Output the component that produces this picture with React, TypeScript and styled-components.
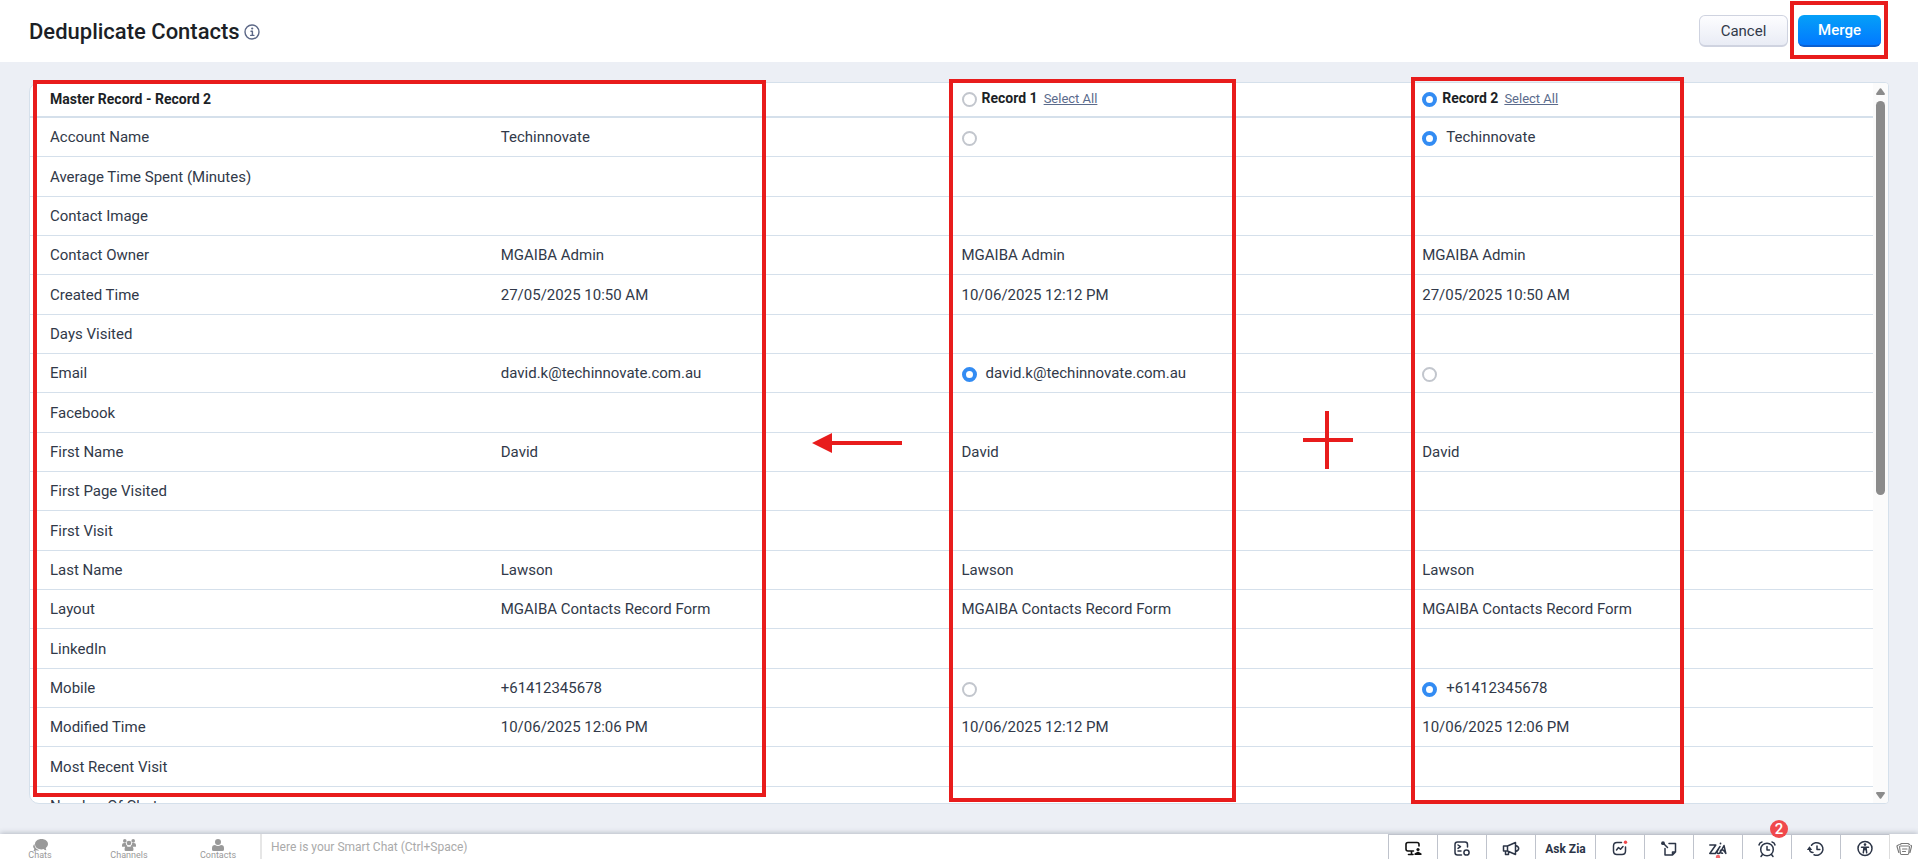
import React from "react";
import styled, { createGlobalStyle, css } from "styled-components";

const GlobalStyle = createGlobalStyle`
  * { box-sizing: border-box; }
  body {
    margin: 0;
    background: #eceff5;
    color: #313949;
    font-family: Roboto, "Liberation Sans", sans-serif;
    font-size: 15px;
  }
  button, input { font-family: inherit; }
`;

const RED = "#e81c1c";
const LINE = "#d5e0eb";

const Shell = styled.div`
  display: flex;
  flex-direction: column;
  height: 100vh;
  overflow: hidden;
`;

const Header = styled.header`
  display: flex;
  align-items: center;
  justify-content: space-between;
  flex: none;
  height: 62px;
  padding: 0 37px 0 29px;
  background: #fff;
`;

const TitleGroup = styled.div`
  display: flex;
  align-items: center;
  gap: 4px;
  padding-top: 2px;
`;

const Title = styled.h1`
  margin: 0;
  color: #1c1f26;
  font-size: 22px;
  font-weight: 500;
  line-height: 28px;
`;

const InfoButton = styled.button`
  display: flex;
  padding: 0;
  border: 0;
  background: none;
  color: #5b6786;
`;

const Actions = styled.div`
  display: flex;
  gap: 10px;
`;

const Button = styled.button<{ $primary?: boolean }>`
  height: 32px;
  min-width: 89px;
  padding: 0 20px;
  border: 1px solid #cfd3e0;
  border-bottom-width: 2px;
  border-radius: 6px;
  background: linear-gradient(#fdfdff, #e9ecf5);
  color: #313949;
  font-size: 15px;
  ${(p) =>
    p.$primary &&
    css`
      min-width: 83px;
      border-width: 0 0 2px;
      border-color: #0a5fd0;
      background: linear-gradient(#05a0f8, #0279ff);
      color: #fff;
      font-weight: 500;
    `}
`;

const MergeSlot = styled.div`
  position: relative;
  display: flex;
`;

const Frame = styled.span<{ $top: number; $left: number; $right?: number; $bottom: number; $width?: number }>`
  position: absolute;
  top: ${(p) => p.$top}px;
  left: ${(p) => p.$left}px;
  bottom: ${(p) => p.$bottom}px;
  ${(p) => (p.$width ? `width: ${p.$width}px;` : `right: ${p.$right}px;`)}
  border: 4px solid ${RED};
  pointer-events: none;
`;

const Main = styled.main`
  display: flex;
  flex: 1;
  min-height: 0;
  padding: 20px 29px 30px;
`;

const Stage = styled.div`
  position: relative;
  display: flex;
  flex: 1;
  min-width: 0;
`;

const Panel = styled.section`
  display: flex;
  flex: 1;
  min-width: 0;
  overflow: hidden;
  border: 1px solid ${LINE};
  border-radius: 10px 4px 4px 10px;
  background: #fff;
`;

const TableArea = styled.div`
  flex: 1;
  min-width: 0;
  overflow: hidden;
`;

const Table = styled.table`
  width: 100%;
  border-collapse: separate;
  border-spacing: 0;
  table-layout: fixed;
`;

const HeadCell = styled.th<{ $first?: boolean }>`
  height: 35px;
  padding: 0 10px 2px ${(p) => (p.$first ? 20 : 10)}px;
  border-bottom: 2px solid ${LINE};
  color: #1c1f26;
  font-size: 14px;
  font-weight: 700;
  line-height: 20px;
  text-align: left;
`;

const Row = styled.tr`
  height: 39px;
  &:nth-child(3n + 2) { height: 40px; }
`;

const NameCell = styled.th`
  padding: 0 10px 0 20px;
  border-bottom: 1px solid ${LINE};
  font-weight: 400;
  line-height: 20px;
  text-align: left;
  white-space: nowrap;
`;

const ValueCell = styled.td`
  padding: 0 10px;
  border-bottom: 1px solid ${LINE};
  line-height: 20px;
  white-space: nowrap;
`;

const Choice = styled.label<{ $gap: number }>`
  display: inline-flex;
  align-items: center;
  gap: ${(p) => p.$gap}px;
  height: 20px;
  vertical-align: top;
`;

const Radio = styled.input`
  appearance: none;
  width: 15px;
  height: 15px;
  margin: 3px 0 0;
  border: 2px solid #c2c6cd;
  border-radius: 50%;
  background: #fff;
  &:checked { border: 4px solid #338cf3; }
`;

const SelectAll = styled.a`
  margin-left: 6px;
  color: #5b6b8c;
  font-size: 13px;
  font-weight: 400;
`;

const ScrollTrack = styled.div`
  display: flex;
  flex: none;
  flex-direction: column;
  align-items: center;
  width: 15px;
  padding: 5px 0 4px;
  background: #fbfbfb;
  color: #8b8b8b;
`;

const ScrollRail = styled.div`
  flex: 1;
  width: 9px;
  padding-top: 6px;
`;

const ScrollThumb = styled.div`
  height: 57%;
  border-radius: 5px;
  background: currentColor;
`;

const Arrow = styled.svg`
  position: absolute;
  top: 351px;
  left: 783px;
`;

const Plus = styled.svg`
  position: absolute;
  top: 329px;
  left: 1274px;
`;

const Dock = styled.footer`
  display: flex;
  flex: none;
  height: 25px;
  background: #fff;
  box-shadow: 0 -1px 5px rgba(60, 70, 90, 0.3);
`;

const ChatTabs = styled.nav`
  display: flex;
  gap: 9px;
  width: 262px;
  border-right: 2px solid #e6e6e6;
`;

const ChatTab = styled.button`
  display: flex;
  flex-direction: column;
  align-items: center;
  width: 80px;
  height: 25px;
  padding: 5px 0 0;
  border: 0;
  background: none;
  color: #999;
  font-size: 9px;
  line-height: 9px;
  svg { flex: none; }
`;

const ChatInput = styled.input`
  flex: 1;
  min-width: 0;
  padding: 0 9px;
  border: 0;
  outline: 0;
  background: transparent;
  font-size: 12px;
  &::placeholder { color: #aaa; opacity: 1; }
`;

const Tools = styled.div`
  display: flex;
  border-top: 1px solid #bfc3cc;
`;

const Tool = styled.button<{ $wide?: boolean }>`
  position: relative;
  display: flex;
  align-items: center;
  justify-content: center;
  width: ${(p) => (p.$wide ? 60 : 49)}px;
  padding: 4px 0 0;
  border: 0;
  border-left: 1px solid #bfc3cc;
  background: #fff;
  color: #2c3547;
  font-size: 12px;
  font-weight: 700;
`;

const Badge = styled.span`
  position: absolute;
  top: -15px;
  left: 27px;
  width: 18px;
  height: 18px;
  border-radius: 50%;
  background: #f0484c;
  color: #fff;
  font-size: 15px;
  font-weight: 500;
  line-height: 18px;
`;

const StackButton = styled.button`
  display: flex;
  align-items: center;
  justify-content: center;
  width: 29px;
  padding: 4px 0 0;
  border: 0;
  border-left: 1px solid #ddd;
  background: #fff;
  color: #777;
`;

const Icon = ({ children, w = 18, h = 18 }: { children: React.ReactNode; w?: number; h?: number }) => (
  <svg
    width={w}
    height={h}
    viewBox={`0 0 ${w} ${h}`}
    fill="none"
    stroke="currentColor"
    strokeWidth="1.5"
    strokeLinecap="round"
    strokeLinejoin="round"
    aria-hidden="true"
  >
    {children}
  </svg>
);

type Pick = { value?: string; checked: boolean };
type Value = string | Pick | undefined;

const rows: [string, string?, Value?, Value?][] = [
  ["Account Name", "Techinnovate", { checked: false }, { value: "Techinnovate", checked: true }],
  ["Average Time Spent (Minutes)"],
  ["Contact Image"],
  ["Contact Owner", "MGAIBA Admin", "MGAIBA Admin", "MGAIBA Admin"],
  ["Created Time", "27/05/2025 10:50 AM", "10/06/2025 12:12 PM", "27/05/2025 10:50 AM"],
  ["Days Visited"],
  [
    "Email",
    "david.k@techinnovate.com.au",
    { value: "david.k@techinnovate.com.au", checked: true },
    { checked: false },
  ],
  ["Facebook"],
  ["First Name", "David", "David", "David"],
  ["First Page Visited"],
  ["First Visit"],
  ["Last Name", "Lawson", "Lawson", "Lawson"],
  ["Layout", "MGAIBA Contacts Record Form", "MGAIBA Contacts Record Form", "MGAIBA Contacts Record Form"],
  ["LinkedIn"],
  ["Mobile", "+61412345678", { checked: false }, { value: "+61412345678", checked: true }],
  ["Modified Time", "10/06/2025 12:06 PM", "10/06/2025 12:12 PM", "10/06/2025 12:06 PM"],
  ["Most Recent Visit"],
  ["Number Of Chats"],
];

const Cell = ({ field, record, value }: { field: string; record: string; value: Value }) => (
  <ValueCell>
    {typeof value === "object" ? (
      <Choice $gap={9}>
        <Radio type="radio" name={field} defaultChecked={value.checked} aria-label={`${field}, ${record}`} />
        {value.value}
      </Choice>
    ) : (
      value
    )}
  </ValueCell>
);

const RecordHead = ({ name, checked }: { name: string; checked: boolean }) => (
  <HeadCell scope="col">
    <Choice $gap={5}>
      <Radio type="radio" name="master" defaultChecked={checked} />
      {name}
    </Choice>
    <SelectAll href="#">Select All</SelectAll>
  </HeadCell>
);

export default function App() {
  return (
    <Shell>
      <GlobalStyle />
      <Header>
        <TitleGroup>
          <Title>Deduplicate Contacts</Title>
          <InfoButton aria-label="About deduplication">
            <Icon w={16} h={16}>
              <circle cx="8" cy="8" r="7" strokeWidth="1.4" />
              <path d="M7 7.2h1.4v4M6.7 11.4h3.2" strokeWidth="1.4" />
              <circle cx="8.2" cy="4.5" r="1.1" fill="currentColor" stroke="none" />
            </Icon>
          </InfoButton>
        </TitleGroup>
        <Actions>
          <Button>Cancel</Button>
          <MergeSlot>
            <Button $primary>Merge</Button>
            <Frame $top={-14} $left={-8} $right={-7} $bottom={-12} />
          </MergeSlot>
        </Actions>
      </Header>

      <Main>
        <Stage>
          <Panel>
            <TableArea>
              <Table>
                <thead>
                  <tr>
                    <HeadCell scope="col" colSpan={2} $first>Master Record - Record 2</HeadCell>
                    <RecordHead name="Record 1" checked={false} />
                    <RecordHead name="Record 2" checked />
                  </tr>
                </thead>
                <tbody>
                  {rows.map(([field, master, first, second]) => (
                    <Row key={field}>
                      <NameCell scope="row">{field}</NameCell>
                      <ValueCell>{master}</ValueCell>
                      <Cell field={field} record="Record 1" value={first} />
                      <Cell field={field} record="Record 2" value={second} />
                    </Row>
                  ))}
                </tbody>
              </Table>
            </TableArea>
            <ScrollTrack>
              <svg width="9" height="7" viewBox="0 0 9 7" fill="currentColor" aria-hidden="true">
                <path d="M3.8.6q.7-.9 1.4 0L8.8 5.6Q9.2 7 8 7H1Q-.2 7 .2 5.6z" />
              </svg>
              <ScrollRail>
                <ScrollThumb />
              </ScrollRail>
              <svg width="9" height="7" viewBox="0 0 9 7" fill="currentColor" aria-hidden="true">
                <path d="M3.8 6.4q.7.9 1.4 0L8.8 1.4Q9.2 0 8 0H1Q-.2 0 .2 1.4z" />
              </svg>
            </ScrollTrack>
          </Panel>
          <Frame $top={-2} $left={4} $bottom={7} $width={733} />
          <Frame $top={-3} $left={920} $bottom={2} $width={287} />
          <Frame $top={-5} $left={1382} $bottom={0} $width={273} />
          <Arrow width="90" height="20" viewBox="0 0 90 20" fill={RED} aria-hidden="true">
            <path d="M0 10 20 0v8h70v4H20v8z" />
          </Arrow>
          <Plus width="50" height="58" viewBox="0 0 50 58" fill={RED} aria-hidden="true">
            <path d="M22 0h4v27h24v4H26v27h-4V31H0v-4h22z" />
          </Plus>
        </Stage>
      </Main>

      <Dock>
        <ChatTabs>
          <ChatTab>
            <svg width="15" height="12" viewBox="0 0 15 12" fill="currentColor" aria-hidden="true">
              <path d="M8.500 0C4.800 0 2 2.200 2 5.200s2.800 5.200 6.500 5.200q1 0 2-.3 1.200 1.200 3 1.200-.8-1-.7-2.400Q15 7.400 15 5.200C15 2.200 12.200 0 8.500 0z" />
              <path d="M1.400 5Q-.3 6.500.3 8.300q.3.900 1 1.500 0 1.300-.9 2.200 1.700.1 2.900-.8 1.500.4 3 0Q1.500 9.800 1.400 5z" />
            </svg>
            Chats
          </ChatTab>
          <ChatTab>
            <svg width="14" height="12" viewBox="0 0 14 12" fill="currentColor" aria-hidden="true">
              <circle cx="2.800" cy="1.900" r="1.800" />
              <circle cx="11.200" cy="1.900" r="1.800" />
              <circle cx="7" cy="4" r="2.300" />
              <path d="M0 7.200V6q0-2 2-2h1.800q.1 2 1.600 2.900-1 .2-1.500.8H.5Q0 7.700 0 7.200zM14 7.200V6q0-2-2-2h-1.800Q10.100 6 8.600 6.900q1 .2 1.500.8h3.400q.5 0 .5-.5zM2.600 11V9.500q0-2.300 2.200-2.300 2.200 1 4.400 0 2.200 0 2.200 2.300V11q0 1-1 1H3.600q-1 0-1-1z" />
            </svg>
            Channels
          </ChatTab>
          <ChatTab>
            <svg width="12" height="12" viewBox="0 0 12 12" fill="currentColor" aria-hidden="true">
              <circle cx="6" cy="3" r="3" />
              <path d="M0 10.500V9q0-3 3-3 3 2.200 6 0 3 0 3 3v1.500Q12 12 10.500 12h-9Q0 12 0 10.500z" />
            </svg>
            Contacts
          </ChatTab>
        </ChatTabs>
        <ChatInput aria-label="Smart Chat" placeholder="Here is your Smart Chat (Ctrl+Space)" />
        <Tools>
          <Tool aria-label="Screen share">
            <Icon>
              <path d="M9.500 11H4Q2 11 2 9V4.500q0-2 2-2h9q2 0 2 2V6M7.500 11v3.500M4.500 14.500h4.500" stroke="#111" strokeWidth="1.600" />
              <circle cx="14" cy="9.500" r="1.600" fill="#111" stroke="none" />
              <path d="M10.500 15v-1.500l3.500-2 3.500 2V15z" fill="#111" stroke="none" />
            </Icon>
          </Tool>
          <Tool aria-label="Commands">
            <Icon>
              <path d="M8.500 15H4.500Q2 15 2 12.500v-8Q2 2 4.500 2H12q2.500 0 2.500 2.500V7M5 5l2.500 1.700L5 8.400M5 11h3" />
              <circle cx="13.500" cy="12.500" r="2.600" />
            </Icon>
          </Tool>
          <Tool aria-label="Announcements">
            <Icon>
              <path d="M1.500 6h4L13.500 2.500v12L5.500 11h-4zM5.500 6v5M3.500 11v3.500h3V11.500M13.500 5.500q3.200.8 3.200 3t-3.200 3" />
            </Icon>
          </Tool>
          <Tool $wide>Ask Zia</Tool>
          <Tool aria-label="Insights">
            <Icon>
              <path d="M10.500 2.500H6Q2.500 2.500 2.500 6v5Q2.500 14.500 6 14.500h5q3.500 0 3.500-3.500V7M5.500 10l2-2.500 2 1.800 2.500-2.800" />
              <circle cx="14.500" cy="2.300" r="1.700" fill="#f0484c" stroke="none" />
            </Icon>
          </Tool>
          <Tool aria-label="Notes">
            <Icon>
              <path d="M9 3.500h6.500v8.500l-3 3H5V8.500M12.500 15v-3h3M3.500 3.500l4 4" />
              <circle cx="3" cy="3.200" r="1.900" fill="currentColor" stroke="none" />
            </Icon>
          </Tool>
          <Tool aria-label="Zia">
            <Icon>
              <path d="M.8 5h6L.8 13.500h5.500L11 6.500 8.200 11.500q-.6 2 1 2 1.300 0 2.300-1.500L15 5.500l1.800 8q-3-5.500-5.300-3-.8 2.500 2 2.800" />
              <circle cx="11.500" cy="3.500" r=".9" fill="currentColor" stroke="none" />
              <circle cx="9" cy="17" r="2.200" fill="#f0686c" stroke="none" />
            </Icon>
          </Tool>
          <Tool aria-label="Reminders">
            <Icon>
              <circle cx="9" cy="9.500" r="6.300" />
              <path d="M9 6.500v3.500h2.500M1 5q.5-2.500 3-3M17 5q-.5-2.500-3-3M4.500 14.500l-1.500 2M13.500 14.500l1.500 2" />
            </Icon>
            <Badge>2</Badge>
          </Tool>
          <Tool aria-label="Recent items">
            <Icon>
              <path d="M4.500 5.300A6.300 6.300 0 1 1 7 14.700M10 6v3.500h2.800M6 12.500q-3.500 0-3.500-4" />
              <path d="M-.2 10 2.500 6.300 5.200 10z" fill="currentColor" stroke="none" />
            </Icon>
          </Tool>
          <Tool aria-label="Accessibility">
            <Icon>
              <circle cx="9" cy="8.500" r="7" />
              <circle cx="9" cy="4.600" r="1.300" fill="currentColor" stroke="none" />
              <path d="M5.500 7.200h7M9 7.200v2.500M7.300 12.800l.7-5.500M10.700 12.800 10 7.300" />
            </Icon>
          </Tool>
        </Tools>
        <StackButton aria-label="Saved items">
          <Icon w={16} h={16}>
            <path d="M4.500 5h8q1 0 .9 1l-.7 6.500q-.1 1-1.100 1H5.500q-1 0-1.100-1L3.600 6Q3.500 5 4.500 5zM6.500 8h4.500M6.500 10.500h3M2.800 11.500 1 5.500Q.8 4.500 1.800 4.200L3 3.800M14 11.500l1.500-6q.1-1-.8-1.200M4 3.500 5.500 2.500H12l1.500 1" strokeWidth="1.100" />
          </Icon>
        </StackButton>
      </Dock>
    </Shell>
  );
}
